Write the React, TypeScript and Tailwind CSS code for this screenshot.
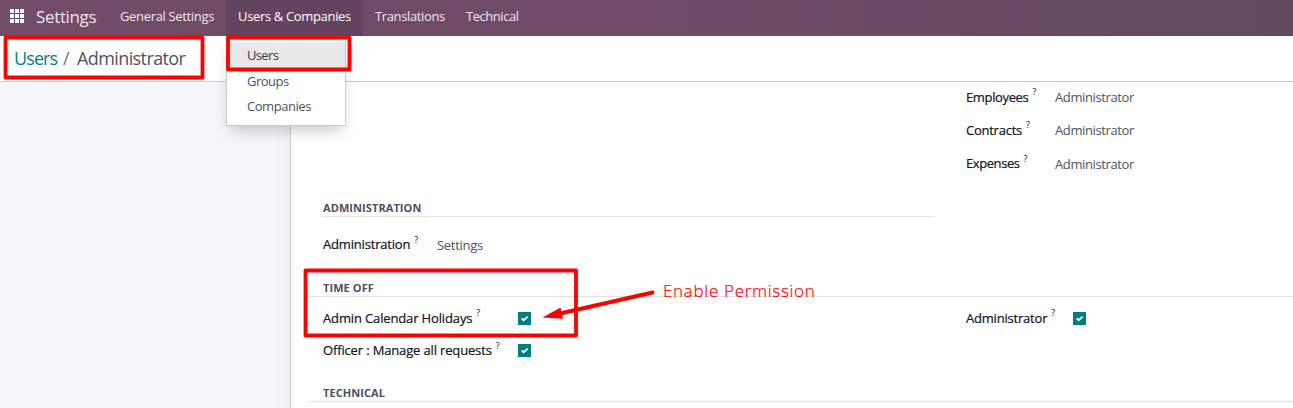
import React from "react";

function Hint() {
  return <span className="ml-1 -mt-[9px] text-[9px] leading-[10px] tracking-normal text-[#014b50] [-webkit-text-stroke:0.1px_#014b50]">?</span>;
}

function Label({ children, className = "" }: { children: React.ReactNode; className?: string }) {
  return (
    <div className={`-mt-px flex shrink-0 items-center whitespace-nowrap pl-px text-[13px] leading-4 text-[#111827] [-webkit-text-stroke:0.22px_#111827] ${className}`}>
      <span>{children}</span>
      <Hint />
    </div>
  );
}

function Value({ children, className = "" }: { children: React.ReactNode; className?: string }) {
  return <span className={`text-[13px] leading-4 text-[#4c5361] ${className}`}>{children}</span>;
}

function Check() {
  return (
    <span className="flex size-[13px] items-center justify-center bg-[#017e84]">
      <svg viewBox="0 0 13 13" className="size-[13px]" fill="none" stroke="#fff" strokeWidth="1.9">
        <path d="M3.6 6.4 5.7 8.3 9.6 4.6" />
      </svg>
    </span>
  );
}

function Heading({ children, className = "" }: { children: React.ReactNode; className?: string }) {
  return (
    <h2 className={`flex items-end border-b border-[#e0e2e5] pb-px text-[11px] leading-[15px] font-bold tracking-[0.08px] text-[#4b5160] ${className}`}>
      <span className="pl-px">{children}</span>
    </h2>
  );
}

export default function App() {
  return (
    <div className="relative flex h-[408px] w-[1293px] flex-col overflow-hidden bg-white font-['Open_Sans','Noto_Sans',sans-serif]">
      <nav className="flex h-9 shrink-0 items-center bg-gradient-to-r from-[#714b67] via-[#6f4b65] to-[#624a5e] text-[13px] text-[#eee8ed]">
        <svg viewBox="0 0 14 14" className="ml-[10px] mb-1 size-[14px] shrink-0" fill="#fff">
          {[0, 5, 10].map((y) => [0, 5, 10].map((x) => <rect key={`${x}-${y}`} x={x} y={y} width="4" height="4" />))}
        </svg>
        <span className="ml-3 mb-[3px] w-[66px] whitespace-nowrap text-[17px] tracking-[-0.35px]">Settings</span>
        <span className="flex h-9 w-[124px] items-center whitespace-nowrap pl-[18px] pb-[3px] tracking-[-0.34px]">General Settings</span>
        <span className="flex h-9 w-[137px] items-center whitespace-nowrap bg-[#63435d] pl-3 pb-[3px] tracking-[-0.34px] text-white">Users &amp; Companies</span>
        <span className="flex h-9 w-[91px] items-center whitespace-nowrap pl-3 pb-[3px] tracking-[-0.6px]"><span className="tracking-[-0.62px]"><span className="tracking-[-0.36px]">Translations</span></span></span>
        <span className="flex h-9 items-center whitespace-nowrap pl-3 pb-[3px] tracking-[-0.46px]">Technical</span>
      </nav>

      <header className="flex h-[46px] shrink-0 items-center whitespace-nowrap border-b border-[#c9ccd2] pl-[14px] text-[18px] text-[#4c5361]">
        <span className="w-[49px] tracking-[-0.9px] text-[#017e84]">Users</span>
        <span className="w-[14px] text-[#6b7280]">/</span>
        <span className="tracking-[-0.6px]">Administrator</span>
      </header>

      <div className="flex min-h-0 grow">
        <aside className="w-[290px] shrink-0 bg-gradient-to-r from-[#f5f6fa] from-95% to-[#eff0f4]" />
        <main className="w-[1003px] shrink-0 border-l border-[#c9ccd5]">
          <section className="h-[118px] pl-[674px]">
            <div className="flex h-[30px] items-center"><Label className="w-[90px] tracking-[-0.36px]">Employees</Label><Value className="tracking-[-0.38px]">Administrator</Value></div>
            <div className="flex h-9 items-center"><Label className="w-[90px] tracking-[-0.25px]">Contracts</Label><Value className="tracking-[-0.38px]">Administrator</Value></div>
            <div className="flex h-[31px] items-center"><Label className="w-[90px] tracking-[-0.42px]">Expenses</Label><Value className="tracking-[-0.38px]">Administrator</Value></div>
          </section>
          <section>
            <Heading className="ml-[31px] h-[17px] w-[612px]">ADMINISTRATION</Heading>
            <div className="ml-[31px] flex h-[55px] items-center"><Label className="w-[115px] tracking-[-0.18px]">Administration</Label><Value className="tracking-[-0.3px]">Settings</Value></div>
          </section>
          <section>
            <Heading className="ml-4 mt-px h-6 pl-[15px]">TIME OFF</Heading>
            <div className="ml-[31px] mt-[5px] flex h-8 items-center">
              <Label className="w-[196px] tracking-[-0.14px]">Admin Calendar Holidays</Label>
              <div className="w-[447px]"><Check /></div>
              <Label className="w-[108px] tracking-[-0.2px]">Administrator</Label>
              <Check />
            </div>
            <div className="ml-[31px] flex h-[33px] items-center"><Label className="w-[196px] tracking-[-0.15px]">Officer : Manage all requests</Label><Check /></div>
          </section>
          <Heading className="ml-4 mt-[18px] h-[17px] pl-[15px]">TECHNICAL</Heading>
        </main>
      </div>

      <div className="absolute left-[226px] top-9 flex h-[90px] w-[120px] flex-col border border-[#c9ccd2] bg-white pt-[5px] text-[13px] text-[#4c5361] shadow-[0_8px_14px_-4px_rgba(0,0,0,0.22)]">
        <span className="flex h-[26px] items-center bg-[#e9e9e9] pl-5 pt-px tracking-[-0.65px] text-[#343a45]">Users</span>
        <span className="flex h-[25px] items-center pl-5 pt-0.5 tracking-[-0.5px]">Groups</span>
        <span className="flex h-[25px] items-center pl-5 pt-0.5 tracking-[-0.45px]">Companies</span>
      </div>

      <svg className="pointer-events-none absolute inset-0" width="1293" height="408" viewBox="0 0 1293 408" fill="none" stroke="#fe0000">
        <g strokeWidth="3.8" strokeLinejoin="round">
          <rect x="5.5" y="37.5" width="197" height="40" />
          <rect x="228" y="37.5" width="121.5" height="32" />
          <rect x="305.5" y="270.5" width="270.5" height="65" />
        </g>
        <path d="M652.5 292.5 558 314" strokeWidth="4" strokeLinecap="round" />
        <path d="M542.5 317.5 560.5 307.5 563 318.8Z" fill="#fe0000" stroke="none" />
      </svg>
      <span className="absolute left-[663px] top-[279px] whitespace-nowrap text-[17px] font-light leading-6 tracking-[0.7px] text-[#fe0000] [-webkit-text-stroke:0.2px_#fe0000]">Enable Permission</span>
    </div>
  );
}
